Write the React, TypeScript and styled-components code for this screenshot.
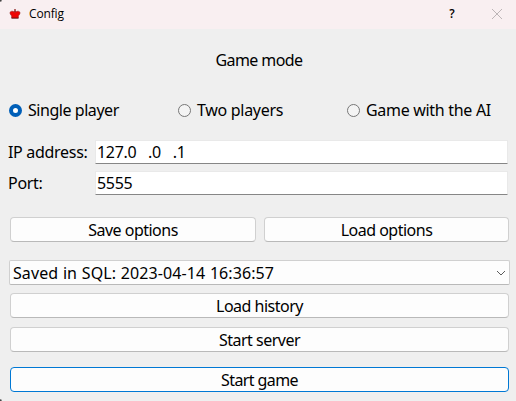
import React from 'react';
import styled, { createGlobalStyle } from 'styled-components';

const GlobalStyle = createGlobalStyle`
  * { box-sizing: border-box; }
  html, body { margin: 0; padding: 0; background: #efefef; }
  body { overflow: hidden; }
`;

const Dialog = styled.div`
  width: 516px;
  height: 401px;
  display: flex;
  flex-direction: column;
  background: radial-gradient(circle at 0 100%, #444 1px, transparent 2.5px), #efefef;
  color: #000;
  font: 16px/24px "Noto Sans", sans-serif;
`;

const TitleBar = styled.header`
  height: 29px;
  flex: none;
  display: flex;
  align-items: center;
  padding: 0 13px 2px 9px;
  background: radial-gradient(circle at 0 0, #444 1px, transparent 2.5px), #f9eff1;
`;

const Title = styled.span`
  margin-left: 8px;
  flex: 1;
  font: 12px/16px "Open Sans", sans-serif;
  letter-spacing: -0.15px;
`;

const HelpButton = styled.span`
  width: 12px;
  margin-right: 33px;
  text-align: center;
  font: 600 12px/16px "Open Sans", sans-serif;
`;

const Text = styled.span<{ $track?: number; $space?: number }>`
  white-space: pre;
  letter-spacing: ${(p) => p.$track ?? -0.3}px;
  word-spacing: ${(p) => p.$space ?? 0}px;
`;

const Heading = styled.div`
  height: 61px;
  display: flex;
  justify-content: center;
  align-items: center;
  padding-left: 2px;
`;

const Modes = styled.div`
  height: 40px;
  display: grid;
  grid-template-columns: 169px 169px 1fr;
  align-items: center;
  padding-left: 9px;
`;

const Option = styled.label`
  display: flex;
  align-items: center;
  gap: 6px;
`;

const Radio = styled.span<{ $checked?: boolean }>`
  width: 13px;
  height: 13px;
  border-radius: 50%;
  border: ${(p) => (p.$checked ? '4px solid #005fb8' : '1px solid #777')};
  background: ${(p) => (p.$checked ? '#fff' : '#f4f4f4')};
`;

const Fields = styled.div`
  display: grid;
  grid-template-columns: 87px 413px;
  row-gap: 7px;
  padding: 10px 0 0 8px;
`;

const Field = styled.div`
  height: 24px;
  padding-left: 1px;
  background: #fff;
  border: 1px solid #e9e9e9;
  border-bottom-color: #868686;
  border-radius: 1px;
  line-height: 23px;
`;

const ButtonPair = styled.div`
  display: grid;
  grid-template-columns: 246px 245px;
  gap: 8px;
  margin: 22px 0 18px 10px;
`;

const Button = styled.div<{ $primary?: boolean }>`
  height: 25px;
  display: flex;
  justify-content: center;
  align-items: center;
  background: #fdfdfd;
  border: 1px solid ${(p) => (p.$primary ? '#0078d4' : '#d0d0d0')};
  border-bottom-color: ${(p) => (p.$primary ? '#0078d4' : '#b9b9b9')};
  border-radius: 4px;
`;

const Select = styled.div`
  height: 25px;
  margin: 0 6px 8px 9px;
  padding: 0 3px;
  display: flex;
  justify-content: space-between;
  align-items: center;
  background: #fdfdfd;
  border: 1px solid #d0d0d0;
  border-bottom-color: #b9b9b9;
  border-radius: 2px;
`;

const Actions = styled.div`
  display: grid;
  grid-template-rows: 34px 40px 25px;
  margin: 0 7px 0 10px;
`;

const Crown = () => (
  <svg width="12" height="12" viewBox="0 0 12 12">
    <path d="M3 3.2c1.3 0 2 .5 2.4 1.2L5.4 3h1.2v1.4C7 3.7 7.7 3.2 9 3.2c1.3 0 2 .7 2 1.8S10.2 7 9.4 7.8V10h-6.800V7.800C1.800 7 1 6.100 1 5s.7-1.800 2-1.800z" fill="#ee0505" stroke="#8a1c1c" strokeWidth=".5" />
    <path d="M6 1v3M5 2h2" stroke="#8a1c1c" strokeWidth=".8" />
    <path d="M2.500 10.200h7" stroke="#5a0808" strokeWidth=".8" />
  </svg>
);

const Close = () => (
  <svg width="12" height="12" viewBox="0 0 12 12">
    <path d="M1 1l10 10M11 1L1 11" stroke="#bdb5b7" fill="none" />
  </svg>
);

const Chevron = () => (
  <svg width="10" height="8" viewBox="0 0 10 8">
    <path d="M1 2l4 4 4-4" stroke="#5c5c5c" fill="none" />
  </svg>
);

export default function App() {
  return (
    <>
      <GlobalStyle />
      <Dialog>
        <TitleBar>
          <Crown />
          <Title>Config</Title>
          <HelpButton>?</HelpButton>
          <Close />
        </TitleBar>
        <Heading><Text $track={-0.6}>Game mode</Text></Heading>
        <Modes>
          <Option><Radio $checked /><Text $track={-0.45}>Single player</Text></Option>
          <Option><Radio /><Text>Two players</Text></Option>
          <Option><Radio /><Text>Game with the AI</Text></Option>
        </Modes>
        <Fields>
          <Text>IP address:</Text>
          <Field><Text $space={2}>127.0  .0  .1</Text></Field>
          <Text>Port:</Text>
          <Field><Text>5555</Text></Field>
        </Fields>
        <ButtonPair>
          <Button><Text $track={-0.5}>Save options</Text></Button>
          <Button><Text $track={-0.5}>Load options</Text></Button>
        </ButtonPair>
        <Select><Text $track={0.08} $space={0.5}>Saved in SQL: 2023-04-14 16:36:57</Text><Chevron /></Select>
        <Actions>
          <Button><Text $track={-0.5}>Load history</Text></Button>
          <Button><Text $track={-0.5}>Start server</Text></Button>
          <Button $primary><Text $track={-0.6}>Start game</Text></Button>
        </Actions>
      </Dialog>
    </>
  );
}
